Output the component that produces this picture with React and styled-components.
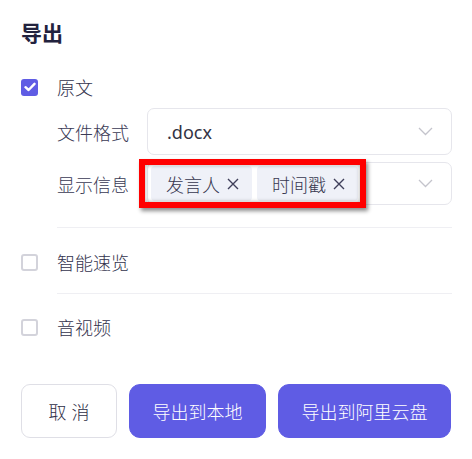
import React from "react";
import styled, { createGlobalStyle } from "styled-components";

const Global = createGlobalStyle`
  html, body { margin: 0; padding: 0; background: #fff; }
  body { font-family: "Noto Sans CJK SC", "Noto Sans", sans-serif; color: #3b3b55; }
`;

const Panel = styled.div`
  width: 472px;
  box-sizing: border-box;
  padding: 18px 20px 0 21px;
  display: flex;
  flex-direction: column;
`;

const Title = styled.h2`
  margin: 0;
  height: 28px;
  line-height: 28px;
  font-size: 21px;
  font-weight: 700;
  color: #22223e;
`;

const CheckRow = styled.label`
  display: flex;
  align-items: center;
  gap: 19px;
  height: 36px;
  margin-top: ${(p) => p.$mt}px;
  font-size: 18px;
  font-weight: 300;
  color: #33334d;
`;

const Box = styled.span`
  width: 17px;
  height: 17px;
  box-sizing: border-box;
  border-radius: 3px;
  display: flex;
  align-items: center;
  justify-content: center;
  background: ${(p) => (p.$checked ? "#5f5ce4" : "#fff")};
  border: ${(p) => (p.$checked ? "none" : "2px solid #d3d3db")};
`;

const Fields = styled.div`
  display: flex;
  flex-direction: column;
  gap: 7px;
  margin-top: 3px;
  padding-left: 36px;
`;

const FieldRow = styled.div`
  display: flex;
  align-items: center;
`;

const Label = styled.span`
  width: 90px;
  flex: none;
  font-size: 18px;
  font-weight: 300;
  color: #3a3a55;
`;

const Select = styled.div`
  position: relative;
  flex: 1;
  height: ${(p) => p.$h}px;
  box-sizing: border-box;
  border: 1px solid #e6e6ec;
  border-radius: 7px;
  display: flex;
  align-items: center;
  padding: 0 18px 0 ${(p) => p.$pl}px;
  gap: 6px;
`;

const Value = styled.span`
  flex: 1;
  font-family: "Noto Sans", "Noto Sans CJK SC", sans-serif;
  font-size: 18px;
  font-weight: 400;
  color: #333344;
`;

const Tags = styled.div`
  flex: 1;
  display: flex;
  gap: 5px;
`;

const Tag = styled.span`
  display: inline-flex;
  align-items: center;
  gap: 7px;
  height: 35px;
  padding: 0 13px 0 15px;
  background: #eff1f8;
  border-radius: 4px;
  font-size: 18px;
  font-weight: 300;
  color: #36364f;
`;

const Highlight = styled.div`
  position: absolute;
  left: -9px;
  top: -4px;
  width: 227px;
  height: 49px;
  box-sizing: border-box;
  border: 6px solid #ff0000;
  box-shadow: 2px 3px 4px rgba(0, 0, 0, 0.45), inset 0 0 4px rgba(0, 0, 0, 0.35);
  pointer-events: none;
`;

const Divider = styled.div`
  height: 1px;
  background: #efeff3;
  margin: ${(p) => p.$mt}px 0 0 36px;
`;

const Actions = styled.div`
  display: flex;
  gap: 12px;
  margin-top: 39px;
`;

const Button = styled.button`
  height: 54px;
  width: ${(p) => p.$w}px;
  box-sizing: border-box;
  border-radius: ${(p) => (p.$primary ? 11 : 9)}px;
  border: 1px solid ${(p) => (p.$primary ? "#5f5ce4" : "#dfdfe6")};
  background: ${(p) => (p.$primary ? "#5f5ce4" : "#fff")};
  color: ${(p) => (p.$primary ? "#fff" : "#2e2e46")};
  font-family: "Noto Sans CJK SC", sans-serif;
  font-size: 18px;
  font-weight: 300;
  letter-spacing: ${(p) => (p.$spaced ? "5px" : "0")};
  text-indent: ${(p) => (p.$spaced ? "5px" : "0")};
  padding: 0;
  cursor: pointer;
`;

const Check = () => (
  <svg width="12" height="10" viewBox="0 0 12 10">
    <path d="M1.5 5.2 L4.6 8 L10.5 1.8" fill="none" stroke="#fff" strokeWidth="2.4" strokeLinecap="round" strokeLinejoin="round" />
  </svg>
);

const Chevron = () => (
  <svg width="15" height="9" viewBox="0 0 15 9">
    <path d="M1 1 L7.5 7.5 L14 1" fill="none" stroke="#c4c4cc" strokeWidth="1.3" />
  </svg>
);

const Close = () => (
  <svg width="12" height="12" viewBox="0 0 12 12">
    <path d="M1 1 L11 11 M11 1 L1 11" stroke="#3f3f5a" strokeWidth="1.4" />
  </svg>
);

export default function App() {
  return (
    <>
      <Global />
      <Panel>
        <Title>导出</Title>
        <CheckRow $mt={23}>
          <Box $checked><Check /></Box>
          原文
        </CheckRow>
        <Fields>
          <FieldRow>
            <Label>文件格式</Label>
            <Select $h={47} $pl={19}>
              <Value>.docx</Value>
              <Chevron />
            </Select>
          </FieldRow>
          <FieldRow>
            <Label>显示信息</Label>
            <Select $h={43} $pl={3}>
              <Tags>
                <Tag>发言人<Close /></Tag>
                <Tag>时间戳<Close /></Tag>
              </Tags>
              <Chevron />
              <Highlight />
            </Select>
          </FieldRow>
        </Fields>
        <Divider $mt={22} />
        <CheckRow $mt={16}>
          <Box />
          智能速览
        </CheckRow>
        <Divider $mt={13} />
        <CheckRow $mt={15}>
          <Box />
          音视频
        </CheckRow>
        <Actions>
          <Button $w={96} $spaced>取消</Button>
          <Button $w={137} $primary>导出到本地</Button>
          <Button $w={173} $primary>导出到阿里云盘</Button>
        </Actions>
      </Panel>
    </>
  );
}
